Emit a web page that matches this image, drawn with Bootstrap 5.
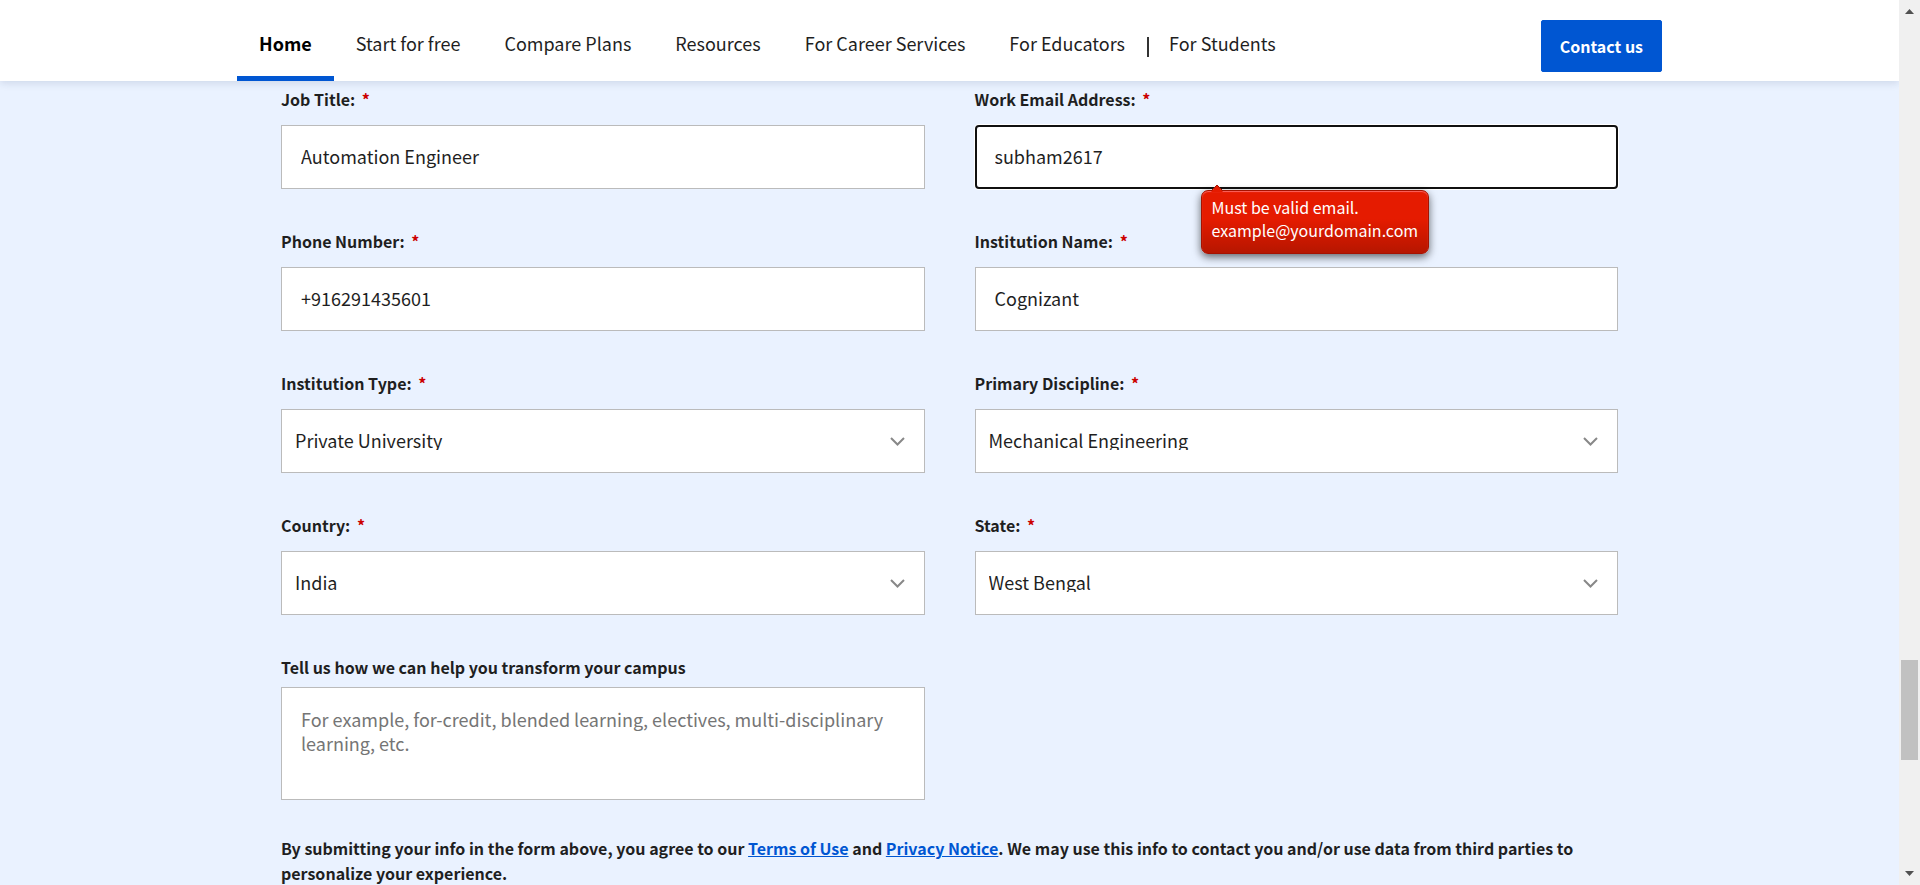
<!DOCTYPE html>
<html lang="en">
<head>
<meta charset="utf-8">
<meta name="viewport" content="width=device-width, initial-scale=1">
<title>Contact us</title>
<link href="https://cdn.jsdelivr.net/npm/bootstrap@5.3.0/dist/css/bootstrap.min.css" rel="stylesheet">
<style>
:root { --brand: #0056d2; --ink: #1f1f1f; --tint: #eaf2ff; }
body { font-family: "Source Sans Pro", "Noto Sans CJK JP", "Noto Sans", sans-serif; color: var(--ink); background: var(--tint); }
.site-header { box-shadow: 0 2px 8px rgba(31, 50, 90, .14); z-index: 2; }
.header-inner { max-width: 1425px; }
.form-inner { max-width: 1337px; }
.main-nav .nav-link { padding: 33px 22px 23px; border-bottom: 5px solid transparent; font-size: 18px; line-height: 20px; color: var(--ink); white-space: nowrap; }
.main-nav .nav-link.active { font-weight: 700; color: #000; border-bottom-color: var(--brand); }
.nav-split { width: 2px; height: 20px; margin: 37px -2px 0 0; background: #333; }
.btn-contact { --bs-btn-bg: var(--brand); --bs-btn-color: #fff; --bs-btn-border-color: var(--brand); --bs-btn-hover-bg: #00419e; --bs-btn-hover-color: #fff; padding: 15px 18px; border-radius: 2px; font-size: 16px; line-height: 20px; font-weight: 700; margin-top: 20px; }
.fields { row-gap: 40px; --bs-gutter-x: 50px; padding-top: 6px; }
.field-label { display: block; font-size: 16px; line-height: 24px; font-weight: 700; margin-bottom: 14px; }
.field-label.tight { margin-bottom: 8px; }
.req { color: #c00; margin-left: 3px; }
.field-box { border: 1px solid #bbb; border-radius: 0; height: 64px; padding: 0 19px 2px; font-size: 18px; line-height: 24px; color: var(--ink); background-color: #fff; }
.field-box:focus { border-color: #101010; box-shadow: none; }
select.field-box { padding: 0 40px 2px 13px; line-height: 20px; background-image: url("data:image/svg+xml,%3Csvg xmlns='http://www.w3.org/2000/svg' viewBox='0 0 15 9'%3E%3Cpath fill='none' stroke='%23888' stroke-width='2' d='M1 1l6.500 6.500L14 1'/%3E%3C/svg%3E"); background-size: 15px 9px; background-position: right 19px center; }
textarea.field-box { height: 113px; padding-top: 19px; resize: none; }
.field-box::placeholder { color: #757575; }
.field-box.current, .field-box.current:focus { border: 2px solid #101010; border-radius: 4px; padding: 0 18px 2px; box-shadow: 0 0 0 1px #fff; }
.error-tip { position: absolute; top: 65px; left: 226px; z-index: 1; padding: 5px 10px 11px; font-size: 16px; line-height: 23px; color: #fff; white-space: nowrap; border: 1px solid #a51200; border-radius: 7px; background: linear-gradient(#e51b00 45%, #b61600); box-shadow: inset 0 1px 1px rgba(255, 120, 120, .8), 0 3px 9px rgba(0, 0, 0, .6); }
.error-tip svg { position: absolute; top: -7px; left: 8px; }
.legal { font-size: 16px; line-height: 25px; font-weight: 700; margin: 36px 0 0; }
.legal a { color: var(--brand); }
.scroll-rail { width: 21px; background: #f0f0f0; padding: 9px 2px; }
.scroll-thumb { height: 100px; background: #c1c1c1; }
</style>
</head>
<body>
<div class="d-flex vh-100 overflow-hidden">
  <div class="flex-grow-1 overflow-hidden">
    <header class="site-header bg-white position-relative">
      <div class="header-inner mx-auto d-flex justify-content-between align-items-start">
        <nav class="main-nav nav flex-nowrap" aria-label="Main">
          <a class="nav-link active" aria-current="page" href="#">Home</a>
          <a class="nav-link" href="#">Start for free</a>
          <a class="nav-link" href="#">Compare Plans</a>
          <a class="nav-link" href="#">Resources</a>
          <a class="nav-link" href="#">For Career Services</a>
          <a class="nav-link" href="#">For Educators</a>
          <span class="nav-split"></span>
          <a class="nav-link" href="#">For Students</a>
        </nav>
        <button type="button" class="btn btn-contact">Contact us</button>
      </div>
    </header>
    <main class="form-inner mx-auto">
      <form novalidate>
        <div class="row fields">
          <div class="col-6">
            <label class="field-label" for="job">Job Title: <span class="req">*</span></label>
            <input class="form-control field-box" id="job" type="text" value="Automation Engineer">
          </div>
          <div class="col-6">
            <label class="field-label" for="email">Work Email Address: <span class="req">*</span></label>
            <div class="position-relative">
              <input class="form-control field-box current" id="email" type="email" value="subham2617" aria-describedby="email-error">
              <div class="error-tip" id="email-error" role="alert">
                <svg width="14" height="8" viewBox="0 0 14 8" aria-hidden="true"><path d="M1 8L7 1l6 7z" fill="#e51b00"/><path d="M1 7l6-6 6 6" fill="none" stroke="#a51200"/></svg>
                Must be valid email.<br>example@yourdomain.com
              </div>
            </div>
          </div>
          <div class="col-6">
            <label class="field-label" for="phone">Phone Number: <span class="req">*</span></label>
            <input class="form-control field-box" id="phone" type="tel" value="+916291435601">
          </div>
          <div class="col-6">
            <label class="field-label" for="institution">Institution Name: <span class="req">*</span></label>
            <input class="form-control field-box" id="institution" type="text" value="Cognizant">
          </div>
          <div class="col-6">
            <label class="field-label" for="type">Institution Type: <span class="req">*</span></label>
            <select class="form-select field-box" id="type"><option>Private University</option></select>
          </div>
          <div class="col-6">
            <label class="field-label" for="discipline">Primary Discipline: <span class="req">*</span></label>
            <select class="form-select field-box" id="discipline"><option>Mechanical Engineering</option></select>
          </div>
          <div class="col-6">
            <label class="field-label" for="country">Country: <span class="req">*</span></label>
            <select class="form-select field-box" id="country"><option>India</option></select>
          </div>
          <div class="col-6">
            <label class="field-label" for="state">State: <span class="req">*</span></label>
            <select class="form-select field-box" id="state"><option>West Bengal</option></select>
          </div>
          <div class="col-6">
            <label class="field-label tight" for="help">Tell us how we can help you transform your campus</label>
            <textarea class="form-control field-box" id="help" placeholder="For example, for-credit, blended learning, electives, multi-disciplinary learning, etc."></textarea>
          </div>
        </div>
        <p class="legal">By submitting your info in the form above, you agree to our <a href="#">Terms of Use</a> and <a href="#">Privacy Notice</a>. We may use this info to contact you and/or use data from third parties to personalize your experience.</p>
      </form>
    </main>
  </div>
  <div class="scroll-rail flex-shrink-0 d-flex flex-column align-items-stretch" aria-hidden="true">
    <svg class="mx-auto d-block" width="9" height="5" viewBox="0 0 9 5"><path d="M0 5L4.500 0 9 5z" fill="#505050"/></svg>
    <div style="flex: 646 1 0"></div>
    <div class="scroll-thumb"></div>
    <div style="flex: 111 1 0"></div>
    <svg class="mx-auto d-block" width="9" height="5" viewBox="0 0 9 5"><path d="M0 0L4.500 5 9 0z" fill="#505050"/></svg>
  </div>
</div>
<script src="https://cdn.jsdelivr.net/npm/bootstrap@5.3.0/dist/js/bootstrap.bundle.min.js"></script>
</body>
</html>
